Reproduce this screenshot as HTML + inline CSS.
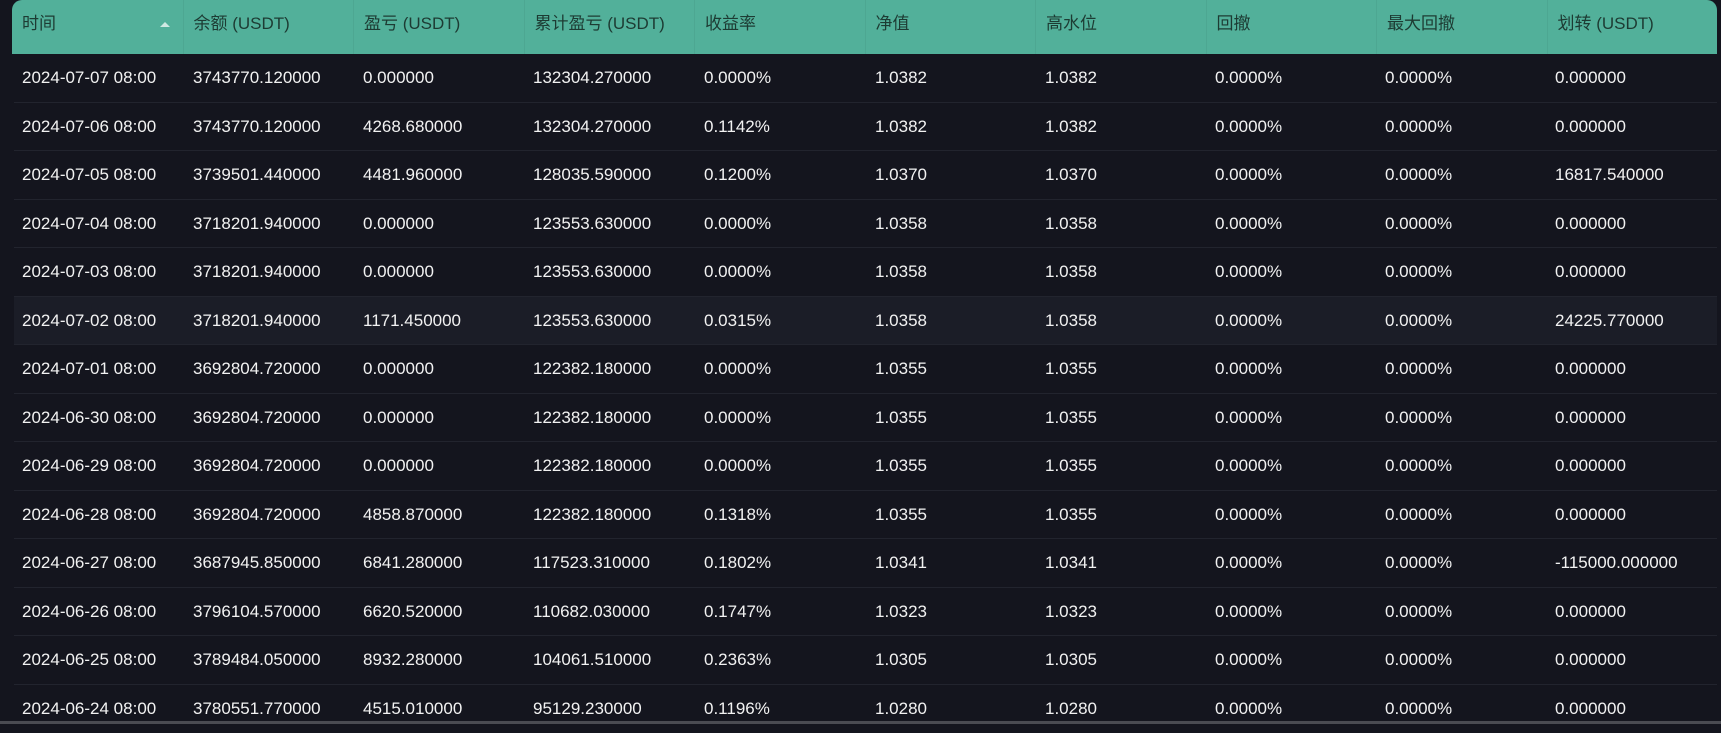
<!DOCTYPE html>
<html><head><meta charset="utf-8"><style>
html,body{margin:0;padding:0;width:1721px;height:724px;overflow:hidden;background:#14151e;font-family:"Liberation Sans","Noto Sans CJK SC",sans-serif;}
.hd{position:absolute;left:12px;top:0;width:1705px;height:54px;background:#52b09a;border-top-left-radius:10px;border-top-right-radius:10px;}
.hd div{position:absolute;top:0;height:54px;line-height:48px;font-size:17px;color:#1d3b33;padding-left:10px;box-sizing:border-box;width:170.5px;}
.hd div.s{border-left:1px solid rgba(0,0,0,0.05);}
.row{position:absolute;left:14px;width:1703px;height:48.5px;border-bottom:1px solid #22242e;box-sizing:border-box;}
.row.h{background:#1b1d27;}
.row div{position:absolute;top:0;line-height:48px;font-size:17px;color:#f2f2f2;}
.bar{position:absolute;left:0;top:721px;width:1721px;height:3px;background:#4a4b52;}
.tri{position:absolute;left:160px;top:22px;width:0;height:0;border-left:5px solid transparent;border-right:5px solid transparent;border-bottom:5px solid #cfe9e2;}
</style></head><body>
<div class="hd">
<div style="left:0">时间</div>
<div class="s" style="left:170.5px">余额 (USDT)</div>
<div class="s" style="left:341px">盈亏 (USDT)</div>
<div class="s" style="left:511.5px">累计盈亏 (USDT)</div>
<div class="s" style="left:682px">收益率</div>
<div class="s" style="left:852.5px">净值</div>
<div class="s" style="left:1023px">高水位</div>
<div class="s" style="left:1193.5px">回撤</div>
<div class="s" style="left:1364px">最大回撤</div>
<div class="s" style="left:1534.5px">划转 (USDT)</div>
</div>
<div class="tri"></div>
<div class="row" style="top:54px"><div style="left:8px">2024-07-07 08:00</div><div style="left:179px">3743770.120000</div><div style="left:349px">0.000000</div><div style="left:519px">132304.270000</div><div style="left:690px">0.0000%</div><div style="left:861px">1.0382</div><div style="left:1031px">1.0382</div><div style="left:1201px">0.0000%</div><div style="left:1371px">0.0000%</div><div style="left:1541px">0.000000</div></div>
<div class="row" style="top:102.5px"><div style="left:8px">2024-07-06 08:00</div><div style="left:179px">3743770.120000</div><div style="left:349px">4268.680000</div><div style="left:519px">132304.270000</div><div style="left:690px">0.1142%</div><div style="left:861px">1.0382</div><div style="left:1031px">1.0382</div><div style="left:1201px">0.0000%</div><div style="left:1371px">0.0000%</div><div style="left:1541px">0.000000</div></div>
<div class="row" style="top:151px"><div style="left:8px">2024-07-05 08:00</div><div style="left:179px">3739501.440000</div><div style="left:349px">4481.960000</div><div style="left:519px">128035.590000</div><div style="left:690px">0.1200%</div><div style="left:861px">1.0370</div><div style="left:1031px">1.0370</div><div style="left:1201px">0.0000%</div><div style="left:1371px">0.0000%</div><div style="left:1541px">16817.540000</div></div>
<div class="row" style="top:199.5px"><div style="left:8px">2024-07-04 08:00</div><div style="left:179px">3718201.940000</div><div style="left:349px">0.000000</div><div style="left:519px">123553.630000</div><div style="left:690px">0.0000%</div><div style="left:861px">1.0358</div><div style="left:1031px">1.0358</div><div style="left:1201px">0.0000%</div><div style="left:1371px">0.0000%</div><div style="left:1541px">0.000000</div></div>
<div class="row" style="top:248px"><div style="left:8px">2024-07-03 08:00</div><div style="left:179px">3718201.940000</div><div style="left:349px">0.000000</div><div style="left:519px">123553.630000</div><div style="left:690px">0.0000%</div><div style="left:861px">1.0358</div><div style="left:1031px">1.0358</div><div style="left:1201px">0.0000%</div><div style="left:1371px">0.0000%</div><div style="left:1541px">0.000000</div></div>
<div class="row h" style="top:296.5px"><div style="left:8px">2024-07-02 08:00</div><div style="left:179px">3718201.940000</div><div style="left:349px">1171.450000</div><div style="left:519px">123553.630000</div><div style="left:690px">0.0315%</div><div style="left:861px">1.0358</div><div style="left:1031px">1.0358</div><div style="left:1201px">0.0000%</div><div style="left:1371px">0.0000%</div><div style="left:1541px">24225.770000</div></div>
<div class="row" style="top:345px"><div style="left:8px">2024-07-01 08:00</div><div style="left:179px">3692804.720000</div><div style="left:349px">0.000000</div><div style="left:519px">122382.180000</div><div style="left:690px">0.0000%</div><div style="left:861px">1.0355</div><div style="left:1031px">1.0355</div><div style="left:1201px">0.0000%</div><div style="left:1371px">0.0000%</div><div style="left:1541px">0.000000</div></div>
<div class="row" style="top:393.5px"><div style="left:8px">2024-06-30 08:00</div><div style="left:179px">3692804.720000</div><div style="left:349px">0.000000</div><div style="left:519px">122382.180000</div><div style="left:690px">0.0000%</div><div style="left:861px">1.0355</div><div style="left:1031px">1.0355</div><div style="left:1201px">0.0000%</div><div style="left:1371px">0.0000%</div><div style="left:1541px">0.000000</div></div>
<div class="row" style="top:442px"><div style="left:8px">2024-06-29 08:00</div><div style="left:179px">3692804.720000</div><div style="left:349px">0.000000</div><div style="left:519px">122382.180000</div><div style="left:690px">0.0000%</div><div style="left:861px">1.0355</div><div style="left:1031px">1.0355</div><div style="left:1201px">0.0000%</div><div style="left:1371px">0.0000%</div><div style="left:1541px">0.000000</div></div>
<div class="row" style="top:490.5px"><div style="left:8px">2024-06-28 08:00</div><div style="left:179px">3692804.720000</div><div style="left:349px">4858.870000</div><div style="left:519px">122382.180000</div><div style="left:690px">0.1318%</div><div style="left:861px">1.0355</div><div style="left:1031px">1.0355</div><div style="left:1201px">0.0000%</div><div style="left:1371px">0.0000%</div><div style="left:1541px">0.000000</div></div>
<div class="row" style="top:539px"><div style="left:8px">2024-06-27 08:00</div><div style="left:179px">3687945.850000</div><div style="left:349px">6841.280000</div><div style="left:519px">117523.310000</div><div style="left:690px">0.1802%</div><div style="left:861px">1.0341</div><div style="left:1031px">1.0341</div><div style="left:1201px">0.0000%</div><div style="left:1371px">0.0000%</div><div style="left:1541px">-115000.000000</div></div>
<div class="row" style="top:587.5px"><div style="left:8px">2024-06-26 08:00</div><div style="left:179px">3796104.570000</div><div style="left:349px">6620.520000</div><div style="left:519px">110682.030000</div><div style="left:690px">0.1747%</div><div style="left:861px">1.0323</div><div style="left:1031px">1.0323</div><div style="left:1201px">0.0000%</div><div style="left:1371px">0.0000%</div><div style="left:1541px">0.000000</div></div>
<div class="row" style="top:636px"><div style="left:8px">2024-06-25 08:00</div><div style="left:179px">3789484.050000</div><div style="left:349px">8932.280000</div><div style="left:519px">104061.510000</div><div style="left:690px">0.2363%</div><div style="left:861px">1.0305</div><div style="left:1031px">1.0305</div><div style="left:1201px">0.0000%</div><div style="left:1371px">0.0000%</div><div style="left:1541px">0.000000</div></div>
<div class="row" style="top:684.5px;border-bottom:none"><div style="left:8px">2024-06-24 08:00</div><div style="left:179px">3780551.770000</div><div style="left:349px">4515.010000</div><div style="left:519px">95129.230000</div><div style="left:690px">0.1196%</div><div style="left:861px">1.0280</div><div style="left:1031px">1.0280</div><div style="left:1201px">0.0000%</div><div style="left:1371px">0.0000%</div><div style="left:1541px">0.000000</div></div>
<div class="bar"></div>
</body></html>
